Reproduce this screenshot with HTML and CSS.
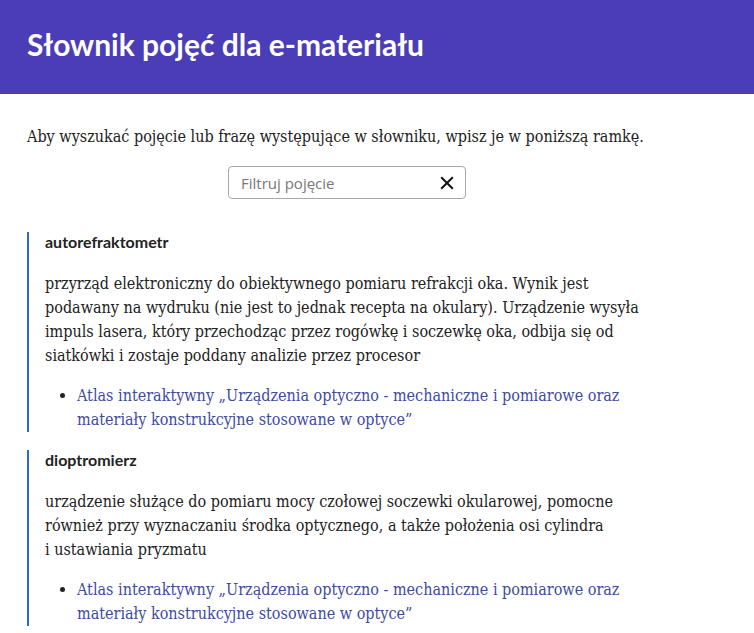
FILE: index.html
```html
<!DOCTYPE html>
<html lang="pl">
<head>
<meta charset="utf-8">
<title>Słownik pojęć</title>
<link rel="stylesheet" href="styles.css">
</head>
<body>
<header class="top">
  <h1 class="title">Słownik pojęć dla e-materiału</h1>
</header>
<main class="content">
  <p class="intro">Aby wyszukać pojęcie lub frazę występujące w słowniku, wpisz je w poniższą ramkę.</p>
  <div class="filter">
    <div class="filter-box">
      <input class="filter-input" type="text" placeholder="Filtruj pojęcie">
      <span class="filter-clear" aria-label="Wyczyść">
        <svg width="14" height="14" viewBox="0 0 14 14"><path d="M1.2 1.2 L12.8 12.8 M12.8 1.2 L1.2 12.8" stroke="#111" stroke-width="2" fill="none"/></svg>
      </span>
    </div>
  </div>
  <dl class="glossary">
    <div class="entry">
      <dt class="term">autorefraktometr</dt>
      <dd class="def">
        <p class="desc">przyrząd elektroniczny do obiektywnego pomiaru refrakcji oka. Wynik jest podawany na wydruku (nie jest to jednak recepta na okulary). Urządzenie wysyła impuls lasera, który przechodząc przez rogówkę i soczewkę oka, odbija się od siatkówki i zostaje poddany analizie przez procesor</p>
        <ul class="refs">
          <li><a class="ref" href="#">Atlas interaktywny „Urządzenia optyczno - mechaniczne i pomiarowe oraz materiały konstrukcyjne stosowane w optyce”</a></li>
        </ul>
      </dd>
    </div>
    <div class="entry">
      <dt class="term">dioptromierz</dt>
      <dd class="def">
        <p class="desc">urządzenie służące do pomiaru mocy czołowej soczewki okularowej, pomocne również przy wyznaczaniu środka optycznego, a także położenia osi cylindra i&nbsp;ustawiania pryzmatu</p>
        <ul class="refs">
          <li><a class="ref" href="#">Atlas interaktywny „Urządzenia optyczno - mechaniczne i pomiarowe oraz materiały konstrukcyjne stosowane w optyce”</a></li>
        </ul>
      </dd>
    </div>
  </dl>
</main>
</body>
</html>
```

FILE: styles.css
```css
* { box-sizing: border-box; }
body {
  margin: 0;
  background: #fff;
  color: #222;
  font-family: "DejaVu Serif Condensed", "DejaVu Serif", serif;
  font-stretch: condensed;
}
.top {
  background: #4a3db7;
  height: 94px;
  padding: 0 27px;
  display: flex;
  align-items: center;
}
.title {
  margin: 0;
  color: #fff;
  font-family: Lato, sans-serif;
  font-weight: 700;
  font-size: 30px;
  font-stretch: normal;
  position: relative;
  top: -3px;
}
.content {
  margin-left: 27px;
  width: 640px;
}
.intro {
  margin: 31px 0 0;
  font-size: 16px;
  line-height: 24px;
  white-space: nowrap;
}
.filter {
  display: flex;
  justify-content: center;
  margin-top: 17px;
}
.filter-box {
  width: 238px;
  height: 33px;
  border: 1px solid #a8a8a8;
  border-radius: 4px;
  display: flex;
  align-items: center;
  padding: 0 11px 0 12px;
}
.filter-input {
  flex: 1;
  border: 0;
  outline: none;
  font-family: "Open Sans", sans-serif;
  font-stretch: normal;
  font-size: 15px;
  color: #333;
  padding: 0;
  min-width: 0;
  background: transparent;
}
.filter-input::placeholder { color: #777; }
.filter-clear { display: flex; }
.glossary { margin: 33px 0 0; }
.entry {
  border-left: 2px solid #2c6fb3;
  padding: 0 12px 0 16px;
  margin-bottom: 18px;
}
.term {
  font-family: Lato, sans-serif;
  font-stretch: normal;
  font-weight: 700;
  font-size: 16px;
  line-height: 20px;
  color: #222;
}
.def { margin: 0; }
.desc {
  margin: 20px 0 0;
  font-size: 16px;
  line-height: 24px;
}
.refs {
  margin: 16px 0 0;
  padding-left: 32px;
}
.refs li { font-size: 16px; line-height: 24px; }
.ref { color: #3d4ba3; text-decoration: none; }
```
